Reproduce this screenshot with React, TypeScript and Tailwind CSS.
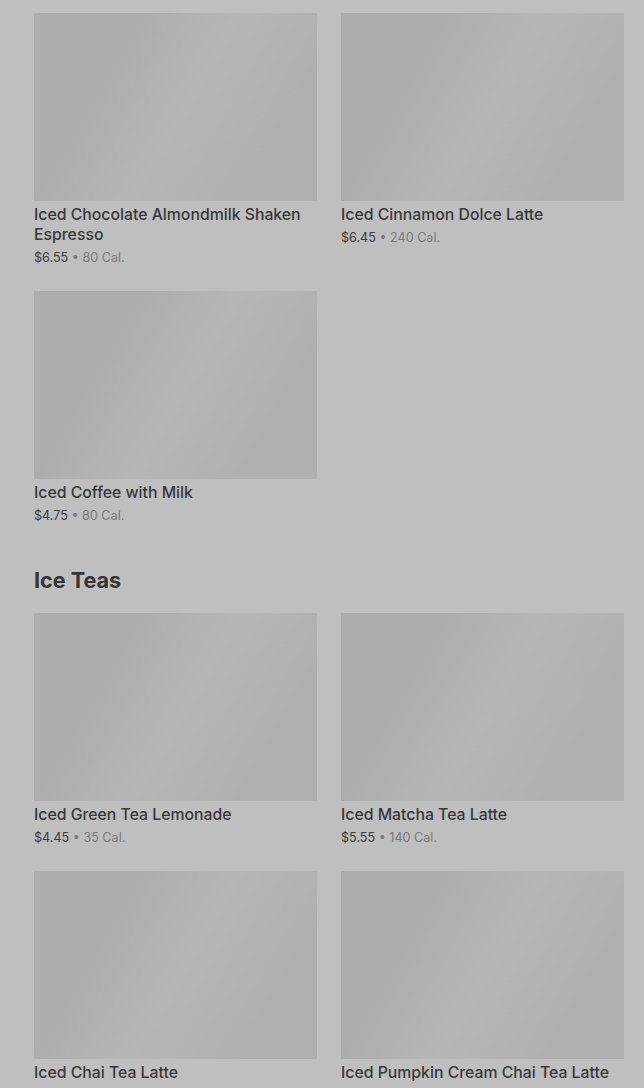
import React from "react";

type Item = { name: string; price: string; cal: string };

const coffees: Item[] = [
  { name: "Iced Chocolate Almondmilk Shaken Espresso", price: "$6.55", cal: "80 Cal." },
  { name: "Iced Cinnamon Dolce Latte", price: "$6.45", cal: "240 Cal." },
  { name: "Iced Coffee with Milk", price: "$4.75", cal: "80 Cal." },
];

const teas: Item[] = [
  { name: "Iced Green Tea Lemonade", price: "$4.45", cal: "35 Cal." },
  { name: "Iced Matcha Tea Latte", price: "$5.55", cal: "140 Cal." },
  { name: "Iced Chai Tea Latte", price: "$5.25", cal: "240 Cal." },
  { name: "Iced Pumpkin Cream Chai Tea Latte", price: "$6.75", cal: "460 Cal." },
];

function MenuCard({ item }: { item: Item }) {
  return (
    <div className="flex flex-col">
      <div className="h-[188px] w-full bg-[linear-gradient(120deg,#adadad_28%,#b6b6b6_52%,#b0b0b0_80%)]" />
      <div className="mt-[4px] text-[15.8px] font-medium leading-[20px] text-[#383838]">
        {item.name}
      </div>
      <div className="mt-[3px] text-[12.6px] leading-[20px] text-[#3a3a3a]">
        {item.price}
        <span className="text-[#7a7a7a]"> • {item.cal}</span>
      </div>
    </div>
  );
}

export default function App() {
  return (
    <div
      className="min-h-[1088px] w-full overflow-hidden bg-[#bfbfbf] pl-[34px] pr-[20px] pt-[13px]"
      style={{ fontFamily: "Inter, 'Noto Sans', sans-serif" }}
    >
      <div className="grid grid-cols-2 gap-x-[24px] gap-y-[23px]">
        {coffees.map((c) => (
          <MenuCard key={c.name} item={c} />
        ))}
      </div>

      <h2 className="mt-[40px] mb-[19px] text-[21.6px] font-bold leading-[28px] text-[#353535]">
        Ice Teas
      </h2>
      <div className="grid grid-cols-2 gap-x-[24px] gap-y-[23px]">
        {teas.map((t) => (
          <MenuCard key={t.name} item={t} />
        ))}
      </div>
    </div>
  );
}
